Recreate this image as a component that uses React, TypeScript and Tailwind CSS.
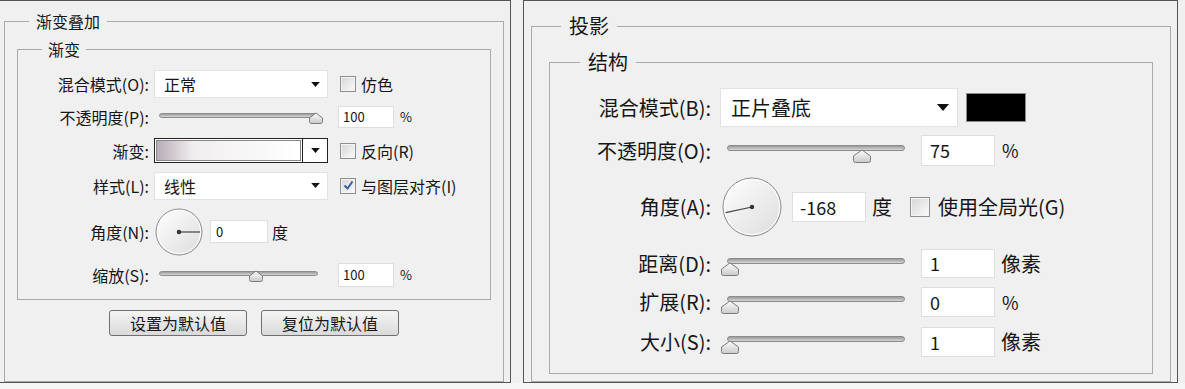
import { useId } from "react";

const cjk = "font-['Noto_Sans_CJK_SC','Noto_Sans',sans-serif]";

const Arrow = ({ big }: { big?: boolean }) => (
  <svg width={big ? 12 : 9} height={big ? 7 : 5} viewBox="0 0 12 7">
    <path d="M0 0h12L6 7z" fill="#111" />
  </svg>
);

const CheckBox = ({ checked, big }: { checked?: boolean; big?: boolean }) => (
  <span
    className={`${
      big ? "w-[20px] h-[20px]" : "w-[16px] h-[16px]"
    } shrink-0 flex items-center justify-center border border-[#8f8f8f] bg-linear-to-br from-[#d6d6d6] to-[#fbfbfb] shadow-[inset_0_0_0_1px_#f4f4f4]`}
  >
    {checked && (
      <svg width="11" height="11" viewBox="0 0 11 11">
        <path d="M1.5 5.5l3 3 5-7" fill="none" stroke="#3b5ea8" strokeWidth="2" />
      </svg>
    )}
  </span>
);

// thumb centre is given in px from the start of the track
const Slider = ({ at, big }: { at: number; big?: boolean }) => {
  const id = useId();
  const tw = big ? 20 : 16;
  const th = big ? 14 : 12;
  const left = (big ? 7 : 5) + at - tw / 2;
  return (
    <div className={big ? "relative w-[190px] h-[24px] shrink-0" : "relative w-[174px] h-[20px] shrink-0"}>
      <div
        className={
          big
            ? "ml-[7px] mt-[6px] w-[178px] h-[6px] rounded-full border border-[#8c8c8c] bg-linear-to-b from-[#9b9b9b] to-[#d6d6d6]"
            : "ml-[5px] mt-[6px] w-[159px] h-[5px] rounded-full border border-[#8c8c8c] bg-linear-to-b from-[#9b9b9b] to-[#d6d6d6]"
        }
      />
      <svg
        className={big ? "absolute top-[10px]" : "absolute top-[5px]"}
        style={{ left }}
        width={tw}
        height={th}
        viewBox={`0 0 ${tw} ${th}`}
      >
        <defs>
          <linearGradient id={id} x1="0" y1="0" x2="0" y2="1">
            <stop offset="0" stopColor="#fdfdfd" />
            <stop offset="1" stopColor="#c9c9c9" />
          </linearGradient>
        </defs>
        <path
          d={`M1.5 ${th - 2.5} Q1.5 ${th - 0.5} 3.5 ${th - 0.5} H${tw - 3.5} Q${tw - 1.5} ${th - 0.5} ${tw - 1.5} ${th - 2.5} V${th / 2} L${tw / 2} 1 L1.5 ${th / 2} Z`}
          fill={`url(#${id})`}
          stroke="#7c7c7c"
        />
      </svg>
    </div>
  );
};

const Dial = ({ size, angle }: { size: number; angle: number }) => {
  const id = useId();
  const c = size / 2;
  const r = c - 1;
  const rad = (angle * Math.PI) / 180;
  const x2 = c + (r - 2) * Math.cos(rad);
  const y2 = c - (r - 2) * Math.sin(rad);
  return (
    <svg width={size} height={size} className="shrink-0">
      <defs>
        <linearGradient id={id} x1="0" y1="0" x2="1" y2="1">
          <stop offset="0" stopColor="#ffffff" />
          <stop offset="1" stopColor="#dcdcdc" />
        </linearGradient>
      </defs>
      <circle cx={c} cy={c} r={r} fill={`url(#${id})`} stroke="#8e8e8e" />
      <circle cx={c} cy={c} r={r - 1.5} fill="none" stroke="#ffffff" />
      <line x1={c} y1={c} x2={x2} y2={y2} stroke="#444" strokeWidth="1.2" />
      <circle cx={c} cy={c} r={2.2} fill="#333" />
    </svg>
  );
};

const Box = ({ value, cls }: { value: string; cls: string }) => (
  <div className={`${cls} shrink-0 flex items-center bg-white border border-[#dedede]`}>{value}</div>
);

const Select = ({ value, big }: { value: string; big?: boolean }) => (
  <div
    className={`${
      big ? "w-[238px] h-[39px] pl-[10px] pr-[8px]" : "w-[174px] h-[28px] pl-[9px] pr-[7px]"
    } shrink-0 flex items-center justify-between bg-white border border-[#e2e2e2]`}
  >
    <span>{value}</span>
    <Arrow big={big} />
  </div>
);

const Label = ({ text, big }: { text: string; big?: boolean }) => (
  <span className={big ? "w-[161px] shrink-0 text-right" : "w-[131px] shrink-0 text-right"}>{text}</span>
);

const GradientPicker = () => (
  <div className="w-[174px] h-[25px] shrink-0 flex border border-[#222] bg-white">
    <div className="flex-1 m-[1px] border border-[#888] bg-linear-to-r from-[#b7adb5] via-[#f1eef0] via-25% to-white" />
    <div className="w-[25px] border-l border-[#222] flex items-center justify-center">
      <Arrow />
    </div>
  </div>
);

const LeftPanel = () => (
  <div className="w-[511px] h-[383px] shrink-0 border-t border-r border-b border-[#555] text-[16px]">
    <fieldset className="ml-[4px] mt-[10px] w-[500px] h-[371px] border border-[#a9a9a9]">
      <legend className="ml-[24px] px-[7px] leading-[20px]">渐变叠加</legend>
      <fieldset className="ml-[12px] mt-[8px] w-[474px] h-[261px] border border-[#a9a9a9]">
        <legend className="ml-[24px] px-[6px] leading-[20px]">渐变</legend>
        <div className="flex flex-col">
          <div className="mt-[11px] h-[28px] flex items-center">
            <Label text="混合模式(O):" />
            <div className="ml-[5px] flex items-center">
              <Select value="正常" />
              <span className="ml-[12px]"><CheckBox /></span>
              <span className="ml-[5px]">仿色</span>
            </div>
          </div>
          <div className="mt-[6px] h-[26px] flex items-center">
            <Label text="不透明度(P):" />
            <div className="ml-[5px] flex items-center">
              <Slider at={157} />
              <Box value="100" cls="ml-[10px] w-[56px] h-[22px] pl-[4px] text-[13px]" />
              <span className="ml-[6px] text-[13px]">%</span>
            </div>
          </div>
          <div className="mt-[8px] h-[25px] flex items-center">
            <Label text="渐变:" />
            <div className="ml-[5px] flex items-center">
              <GradientPicker />
              <span className="ml-[12px]"><CheckBox /></span>
              <span className="ml-[5px]">反向(R)</span>
            </div>
          </div>
          <div className="mt-[9px] h-[27px] flex items-center">
            <Label text="样式(L):" />
            <div className="ml-[5px] flex items-center">
              <Select value="线性" />
              <span className="ml-[12px]"><CheckBox checked /></span>
              <span className="ml-[5px]">与图层对齐(I)</span>
            </div>
          </div>
          <div className="mt-[9px] h-[47px] flex items-center">
            <Label text="角度(N):" />
            <div className="ml-[6px] flex items-center">
              <Dial size={48} angle={0} />
              <Box value="0" cls="ml-[7px] w-[58px] h-[23px] pl-[5px] text-[13px]" />
              <span className="ml-[4px]">度</span>
            </div>
          </div>
          <div className="mt-[8px] h-[24px] flex items-center">
            <Label text="缩放(S):" />
            <div className="ml-[5px] flex items-center">
              <Slider at={97} />
              <Box value="100" cls="ml-[10px] w-[56px] h-[24px] pl-[4px] text-[13px]" />
              <span className="ml-[6px] text-[13px]">%</span>
            </div>
          </div>
        </div>
      </fieldset>
      <div className="mt-[10px] flex justify-center gap-[14px]">
        <button className="w-[138px] h-[26px] rounded-[3px] border border-[#707070] bg-linear-to-b from-[#f5f5f5] to-[#dadada] leading-none">
          设置为默认值
        </button>
        <button className="w-[138px] h-[26px] rounded-[3px] border border-[#707070] bg-linear-to-b from-[#f5f5f5] to-[#dadada] leading-none">
          复位为默认值
        </button>
      </div>
    </fieldset>
  </div>
);

const RightPanel = () => (
  <div className="w-[655px] h-[383px] shrink-0 border border-[#555] text-[20px]">
    <fieldset className="ml-[7px] mt-[13px] w-[640px] h-[368px] border border-[#a9a9a9]">
      <legend className="ml-[29px] px-[8px] leading-[24px]">投影</legend>
      <fieldset className="ml-[17px] mt-[12px] w-[604px] h-[324px] border border-[#a9a9a9]">
        <legend className="ml-[30px] px-[8px] leading-[24px]">结构</legend>
        <div className="flex flex-col">
          <div className="mt-[14px] h-[39px] flex items-center">
            <Label big text="混合模式(B):" />
            <div className="ml-[9px] flex items-center">
              <Select big value="正片叠底" />
              <div className="ml-[8px] w-[60px] h-[29px] bg-black border border-[#8a8a8a]" />
            </div>
          </div>
          <div className="mt-[8px] h-[31px] flex items-center">
            <Label big text="不透明度(O):" />
            <div className="ml-[9px] flex items-center">
              <Slider big at={135} />
              <Box value="75" cls="ml-[11px] w-[74px] h-[31px] pl-[8px] text-[18px]" />
              <span className="ml-[7px] text-[18px]">%</span>
            </div>
          </div>
          <div className="mt-[11px] h-[60px] flex items-center">
            <Label big text="角度(A):" />
            <div className="ml-[11px] flex items-center">
              <Dial size={60} angle={-168} />
              <Box value="-168" cls="ml-[10px] w-[74px] h-[30px] pl-[7px] text-[18px]" />
              <span className="ml-[6px]">度</span>
              <span className="ml-[18px]"><CheckBox big /></span>
              <span className="ml-[8px]">使用全局光(G)</span>
            </div>
          </div>
          <div className="mt-[12px] h-[29px] flex items-center">
            <Label big text="距离(D):" />
            <div className="ml-[9px] flex items-center">
              <Slider big at={3} />
              <Box value="1" cls="ml-[11px] w-[74px] h-[29px] pl-[8px] text-[18px]" />
              <span className="ml-[6px]">像素</span>
            </div>
          </div>
          <div className="mt-[9px] h-[30px] flex items-center">
            <Label big text="扩展(R):" />
            <div className="ml-[9px] flex items-center">
              <Slider big at={3} />
              <Box value="0" cls="ml-[11px] w-[74px] h-[30px] pl-[8px] text-[18px]" />
              <span className="ml-[7px] text-[18px]">%</span>
            </div>
          </div>
          <div className="mt-[10px] h-[30px] flex items-center">
            <Label big text="大小(S):" />
            <div className="ml-[9px] flex items-center">
              <Slider big at={3} />
              <Box value="1" cls="ml-[11px] w-[74px] h-[30px] pl-[8px] text-[18px]" />
              <span className="ml-[6px]">像素</span>
            </div>
          </div>
        </div>
      </fieldset>
    </fieldset>
  </div>
);

export default function App() {
  return (
    <div className={`${cjk} w-[1185px] h-[389px] overflow-hidden bg-[#f0f0f0] text-[#161616] flex flex-col`}>
      <div className="flex">
        <LeftPanel />
        <div className="w-[12px] shrink-0" />
        <RightPanel />
      </div>
      <div className="flex-1 bg-[#f6f6f6]" />
    </div>
  );
}
